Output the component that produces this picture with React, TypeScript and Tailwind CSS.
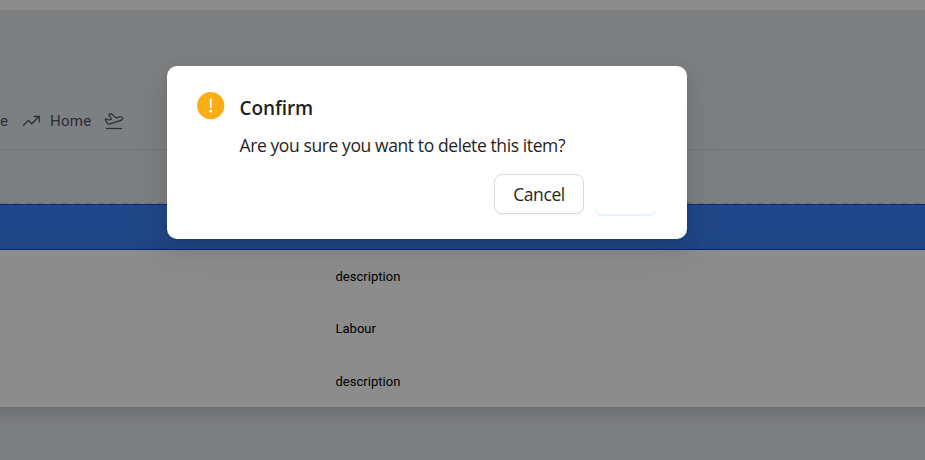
import React from "react";

function TrendIcon() {
  return (
    <svg width="18" height="13" viewBox="0.5 0 18 13" fill="none" stroke="#4b5563" strokeWidth="1.3">
      <path d="M.6 10.8 5.8 5.4 9.3 8.8 16.4 1.6M11 1.5h5.8v5.8" />
    </svg>
  );
}

function TakeoffIcon() {
  return (
    <svg width="20" height="17" viewBox="0 0 20 17" fill="none" stroke="#4b5563" strokeWidth="1.2" strokeLinejoin="round" strokeLinecap="round">
      <path d="M1.1 6.2 2.6 5.8 4.6 7 7.4 6.2 4.8 1.3 7.3 .7 12 4.9 15.8 3.9C17.4 3.5 18.5 4.1 18.7 5.1C18.9 6.2 18.1 7 16.8 7.4L6 10.9C4.9 11.2 3.9 10.9 3.3 10.2Z" />
      <path d="M2 15.5h16" strokeLinecap="butt" />
    </svg>
  );
}

const rows = ["description", "Labour", "description"];

export default function App() {
  return (
    <div className="relative h-[460px] w-[925px] overflow-hidden bg-gray-200 font-['Roboto',sans-serif]">
      <div className="h-[10px] bg-white" />
      <div className="flex h-[140px] items-end border-b border-[#d1d5db] pb-[17px]">
        <nav className="flex h-[21px] items-center text-[15px] leading-[21px] tracking-[0.3px] text-gray-600">
          <span className="w-[23px]">e</span>
          <TrendIcon />
          <span className="ml-[9px] w-[54px]">Home</span>
          <TakeoffIcon />
        </nav>
      </div>
      <div className="h-[52px]" />
      <div className="h-[2px] bg-[repeating-linear-gradient(90deg,#d1d3d7_0px_6px,transparent_6px_12px)] bg-[position:2px_0]" />
      <div className="h-[46px] border-y border-blue-700 bg-[#3b82f6]" />
      <div className="-mx-10 flex h-[157px] flex-col bg-white pt-[0.6px] pl-[375.5px] text-[13px] text-black shadow-[0_6px_18px_rgba(0,0,0,0.16)]">
        {rows.map((row, i) => (
          <div key={i} className="flex h-[52.5px] shrink-0 items-center leading-[20px] tracking-[0.02px]">{row}</div>
        ))}
      </div>

      <div className="absolute inset-0 bg-black/45">
        <div role="dialog" className="ml-[167px] mt-[66px] flex h-[173px] w-[520px] flex-col rounded-[10px] bg-white px-[30px] pt-[26px] pb-[25px] font-['Open_Sans','Noto_Sans',sans-serif] text-[#1f1f1f] shadow-[0_7.5px_20px_rgba(0,0,0,0.08),0_4px_7.5px_-5px_rgba(0,0,0,0.12),0_11px_35px_10px_rgba(0,0,0,0.05)]">
          <div className="flex gap-[14.5px]">
            <svg width="28" height="28" viewBox="0.3 0.3 28 28">
              <circle cx="14" cy="14" r="13.6" fill="#faad14" />
              <path d="M13.2 7h1.7v9.2h-1.7z" fill="#fff" />
              <circle cx="14" cy="19.5" r="1.4" fill="#fff" />
            </svg>
            <div>
              <h2 className="h-[32px] text-[19px] leading-[32px] font-semibold tracking-[-0.1px]">Confirm</h2>
              <p className="mt-[7px] h-[28px] text-[17.5px] leading-[28px] tracking-[-0.4px] whitespace-nowrap">Are you sure you want to delete this item?</p>
            </div>
          </div>
          <div className="mt-auto flex justify-end gap-[10px]">
            <button className="h-[40px] w-[90px] rounded-[8px] border border-[#d9d9d9] bg-white text-[17.5px] tracking-[-0.4px] shadow-[0_2px_0_rgba(0,0,0,0.02)]">Cancel</button>
            <button aria-label="Confirm deletion" className="h-[40px] w-[63px] rounded-[8px] bg-white shadow-[0_2px_0_#e6f4ff]" />
          </div>
        </div>
      </div>
    </div>
  );
}
